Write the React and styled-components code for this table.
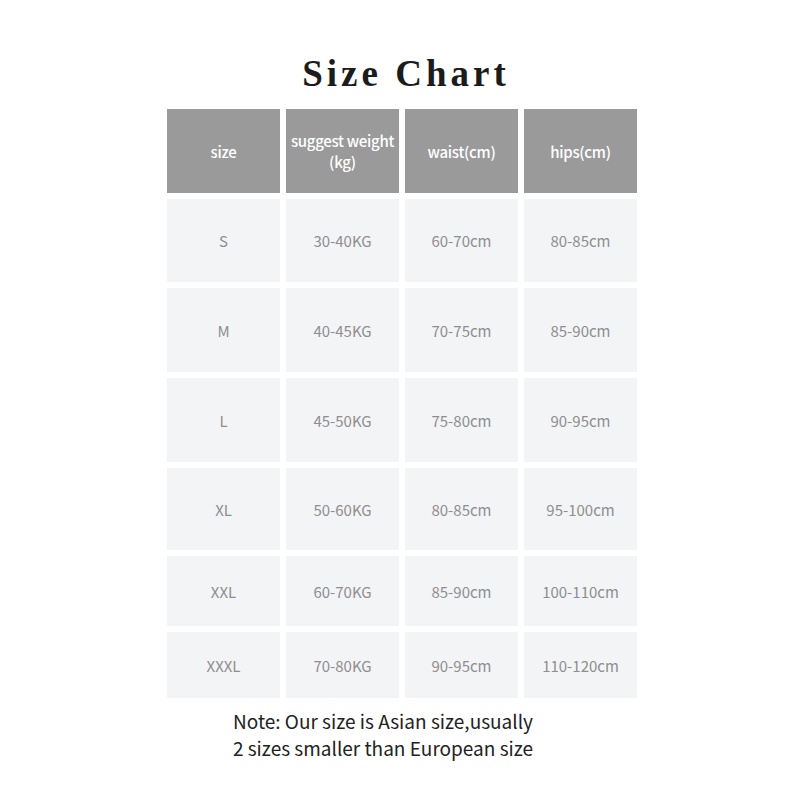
import React from 'react'
import styled, { createGlobalStyle } from 'styled-components'

const GlobalStyle = createGlobalStyle`
    body {
        margin: 0;
        background: #fff;
        font-family: "Noto Sans CJK SC", "Noto Sans", sans-serif;
    }
`

const headers = ['size', 'suggest weight\n(kg)', 'waist(cm)', 'hips(cm)']

const rows = [
    { h: 83, cells: ['S', '30-40KG', '60-70cm', '80-85cm'] },
    { h: 84, cells: ['M', '40-45KG', '70-75cm', '85-90cm'] },
    { h: 84, cells: ['L', '45-50KG', '75-80cm', '90-95cm'] },
    { h: 82, cells: ['XL', '50-60KG', '80-85cm', '95-100cm'] },
    { h: 70, cells: ['XXL', '60-70KG', '85-90cm', '100-110cm'] },
    { h: 66, cells: ['XXXL', '70-80KG', '90-95cm', '110-120cm'] },
]

function App() {
    return (
        <Page>
            <GlobalStyle />
            <Title>Size Chart</Title>
            <Table>
                <Row height={84}>
                    {headers.map(h => <HeadCell key={h}>{h}</HeadCell>)}
                </Row>
                {rows.map(row => (
                    <Row key={row.cells[0]} height={row.h}>
                        {row.cells.map((c, i) => <Cell key={i}>{c}</Cell>)}
                    </Row>
                ))}
            </Table>
            <Note>
                Note: Our size is Asian size,usually<br />
                2 sizes smaller than European size
            </Note>
        </Page>
    )
}

export default App

const Page = styled.div`
    width: 800px;
    height: 800px;
    display: flex;
    flex-direction: column;
    align-items: center;
    padding-top: 50px;
    box-sizing: border-box;
`
const Title = styled.h1`
    margin: 0 0 0 12px;
    font-family: "Liberation Serif", serif;
    font-weight: bold;
    font-size: 37px;
    line-height: 48px;
    letter-spacing: 4px;
    color: #1c1c1c;
`
const Table = styled.div`
    margin: 11px 0 0 4px;
    display: flex;
    flex-direction: column;
    gap: 6px;
`
const Row = styled.div`
    display: grid;
    grid-template-columns: repeat(4, 113px);
    gap: 6px;
    height: ${p => p.height}px;
`
const HeadCell = styled.div`
    background: #9a9a9a;
    color: #fff;
    display: flex;
    align-items: center;
    justify-content: center;
    text-align: center;
    white-space: pre-line;
    font-size: 15px;
    font-weight: 500;
    line-height: 21px;
    letter-spacing: -0.3px;
`
const Cell = styled.div`
    background: #f3f4f6;
    color: #8e8e8e;
    display: flex;
    align-items: center;
    justify-content: center;
    font-size: 15px;
`
const Note = styled.div`
    margin: 9px 34px 0 0;
    text-align: center;
    color: #222;
    font-size: 19px;
    line-height: 27px;
`
